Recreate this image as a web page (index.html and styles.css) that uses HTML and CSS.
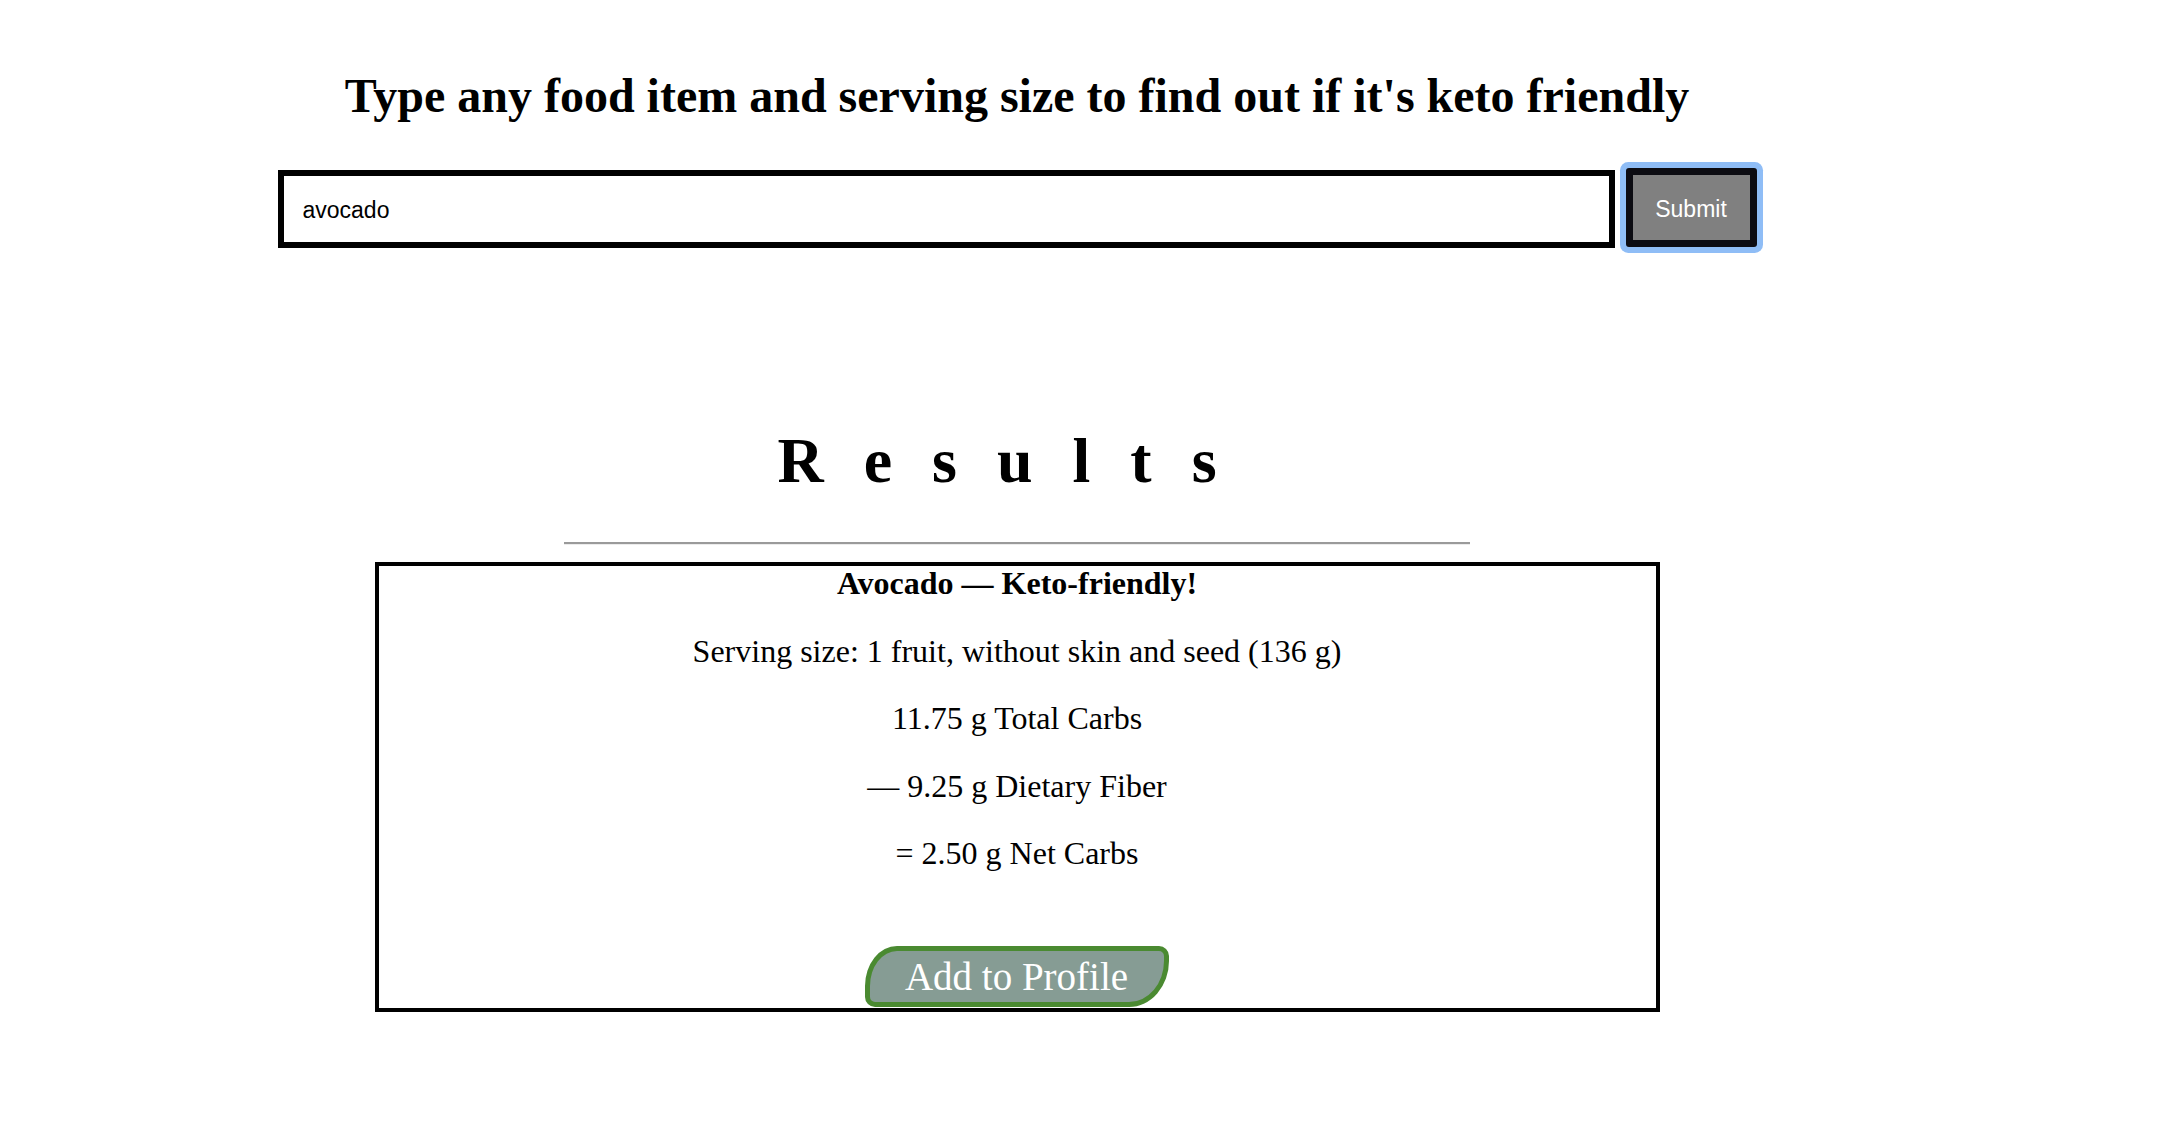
FILE: index.html
```html
<!DOCTYPE html>
<html lang="en">
<head>
<meta charset="utf-8">
<title>Keto Checker</title>
<link rel="stylesheet" href="styles.css">
</head>
<body>
<main class="page">
  <h1 class="title">Type any food item and serving size to find out if it's keto friendly</h1>
  <form class="search">
    <input class="search-input" type="text" value="avocado">
    <button class="search-submit" type="button">Submit</button>
  </form>
  <h2 class="results-heading">Results</h2>
  <hr class="divider">
  <section class="result-card">
    <p class="result-name">Avocado — Keto-friendly!</p>
    <p class="result-line">Serving size: 1 fruit, without skin and seed (136 g)</p>
    <p class="result-line">11.75 g Total Carbs</p>
    <p class="result-line">— 9.25 g Dietary Fiber</p>
    <p class="result-line">= 2.50 g Net Carbs</p>
    <button class="add-profile" type="button">Add to Profile</button>
  </section>
</main>
</body>
</html>
```

FILE: styles.css
```css
html, body {
  margin: 0;
  padding: 0;
  background: #fff;
  color: #000;
}

.page {
  width: 2034px;
  font-family: "Liberation Serif", "Times New Roman", serif;
  display: flex;
  flex-direction: column;
  align-items: center;
}

.title {
  margin: 69px 0 0;
  font-size: 48px;
  line-height: 54px;
  font-weight: bold;
  text-align: center;
}

.search {
  margin: 45px 0 0;
  display: flex;
  align-items: flex-start;
  gap: 11px;
}

.search-input {
  box-sizing: border-box;
  width: 1337px;
  height: 78px;
  margin-top: 2px;
  border: 6px solid #000;
  padding: 3px 19px 0;
  font-family: "Liberation Sans", Arial, sans-serif;
  font-size: 23px;
  color: #000;
  background: #fff;
  outline: none;
}

.search-submit {
  box-sizing: border-box;
  width: 131px;
  height: 79px;
  border: 7px solid #0c0c12;
  border-radius: 3px;
  background: #808080;
  color: #fff;
  font-family: "Liberation Sans", Arial, sans-serif;
  font-size: 23px;
  padding: 4px 0 0;
  box-shadow: 0 0 0 6px #8fbdf6;
}

.results-heading {
  margin: 176px 0 0;
  font-size: 64px;
  line-height: 74px;
  font-weight: bold;
  letter-spacing: 40px;
  text-align: center;
}

.divider {
  width: 906px;
  height: 0;
  margin: 44px 0 0;
  border: 0;
  border-top: 2px solid #9a9a9a;
  border-bottom: 1px solid #ececec;
  align-self: center;
}

.result-card {
  box-sizing: border-box;
  width: 1285px;
  margin-top: 17px;
  border: 4px solid #000;
  text-align: center;
  font-size: 32px;
  line-height: 35.5px;
  display: flex;
  flex-direction: column;
  align-items: center;
  padding-bottom: 1px;
}

.result-card p {
  margin: 0 0 32px;
}

.result-name {
  font-weight: bold;
}

.result-card .result-line:last-of-type {
  margin-bottom: 0;
}

.add-profile {
  margin-top: 74.5px;
  border: 5px solid #4a8a31;
  border-radius: 32px 10px 40px 10px / 40px 10px 46px 10px;
  background: #869c94;
  color: #fff;
  font-family: "Liberation Serif", "Times New Roman", serif;
  font-size: 39px;
  line-height: 45px;
  padding: 3px 36px 3px 35px;
}
```
